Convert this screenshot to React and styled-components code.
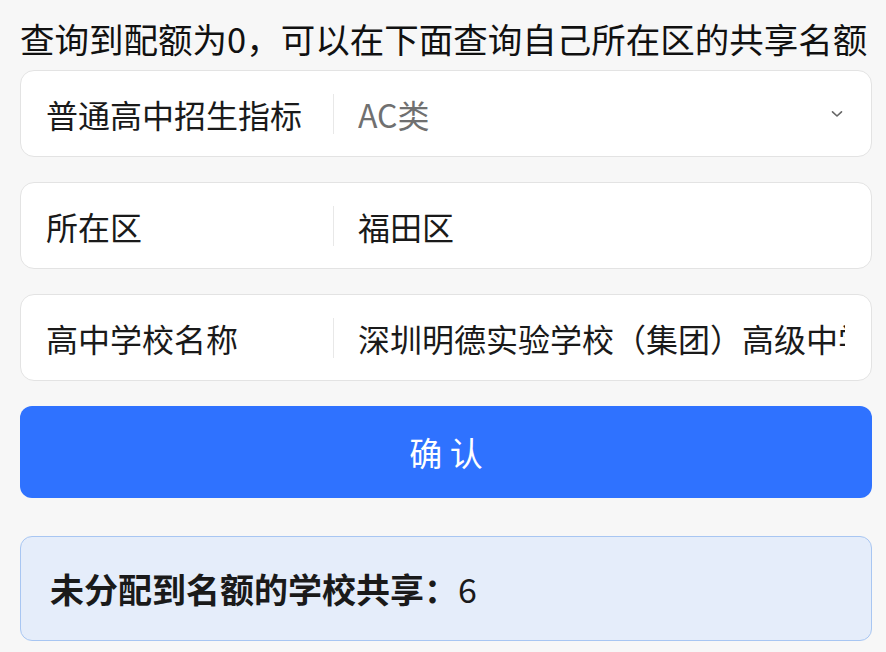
import React from "react";
import styled, { createGlobalStyle } from "styled-components";

const GlobalStyle = createGlobalStyle`
  html, body { margin: 0; padding: 0; background: #f7f7f7; }
  body { font-family: "Noto Sans CJK SC", "Noto Sans", sans-serif; color: #1a1a1a; }
`;

const Page = styled.div`
  padding: 14px 14px 0 20px;
  display: flex;
  flex-direction: column;
`;

const Title = styled.div`
  font-size: 34.5px;
  line-height: 48px;
  white-space: nowrap;
  color: #111;
  margin-bottom: 8px;
`;

const Card = styled.div`
  display: flex;
  align-items: center;
  height: 87px;
  box-sizing: border-box;
  background: #fff;
  border: 1px solid #e3e3e3;
  border-radius: 14px;
  padding: 0 26px 0 25px;
  margin-bottom: 25px;
`;

const Label = styled.div`
  width: 287px;
  flex-shrink: 0;
  font-size: 32px;
  color: #1a1a1a;
  white-space: nowrap;
`;

const Divider = styled.div`
  width: 1px;
  height: 40px;
  background: #e8e8e8;
  flex-shrink: 0;
  margin-right: 24px;
`;

const Value = styled.div`
  flex: 1;
  min-width: 0;
  font-size: 32px;
  color: ${(p) => (p.$muted ? "#707070" : "#1a1a1a")};
  white-space: nowrap;
  overflow: hidden;
`;

const Chevron = styled.svg`
  flex-shrink: 0;
  margin-right: 2px;
`;

const Button = styled.button`
  height: 92px;
  border: none;
  border-radius: 12px;
  background: #2f72ff;
  color: #fff;
  font-family: inherit;
  font-size: 33px;
  margin-bottom: 38px;
  padding: 0;
`;

const Result = styled.div`
  height: 105px;
  box-sizing: border-box;
  background: #e5edfa;
  border: 1px solid #a8c6f2;
  border-radius: 12px;
  display: flex;
  align-items: center;
  padding: 0 29px;
  font-size: 34px;
`;

const Strong = styled.span`
  font-weight: 700;
`;

export default function App() {
  return (
    <>
      <GlobalStyle />
      <Page>
        <Title>查询到配额为0，可以在下面查询自己所在区的共享名额</Title>
        <Card>
          <Label>普通高中招生指标</Label>
          <Divider />
          <Value $muted>AC类</Value>
          <Chevron width="12" height="8" viewBox="0 0 12 8">
            <path d="M1.5 1.8 L6 6 L10.5 1.8" fill="none" stroke="#666" strokeWidth="1.6" strokeLinecap="round" strokeLinejoin="round" />
          </Chevron>
        </Card>
        <Card>
          <Label>所在区</Label>
          <Divider />
          <Value>福田区</Value>
        </Card>
        <Card>
          <Label>高中学校名称</Label>
          <Divider />
          <Value>深圳明德实验学校（集团）高级中学</Value>
        </Card>
        <Button>确 认</Button>
        <Result>
          <Strong>未分配到名额的学校共享：</Strong>6
        </Result>
      </Page>
    </>
  );
}
